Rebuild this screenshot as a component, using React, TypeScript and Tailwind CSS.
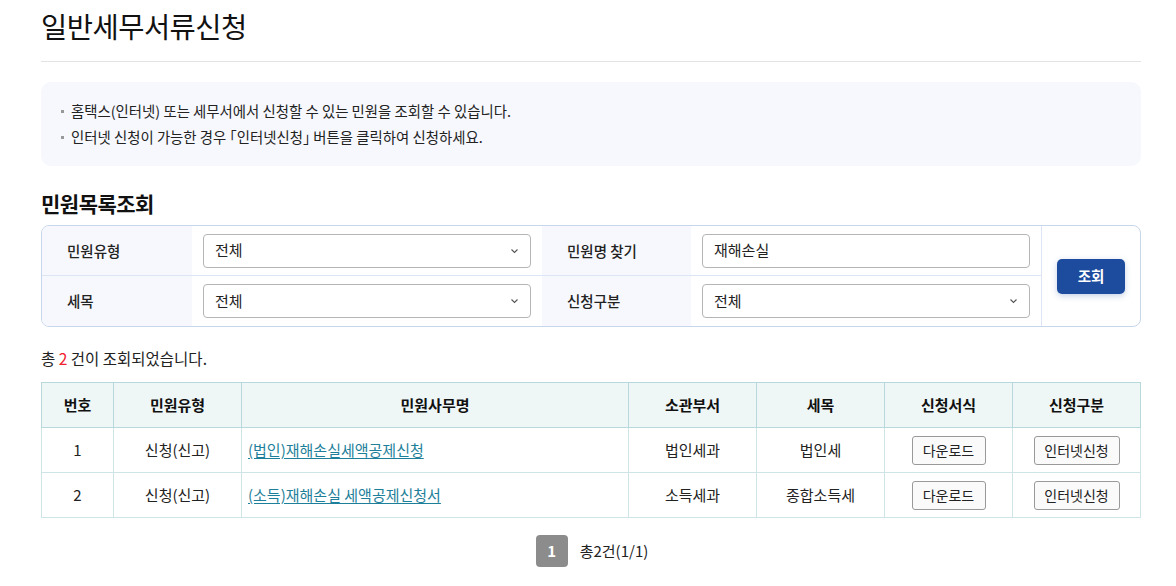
import React from "react";

const font = { fontFamily: '"Noto Sans CJK KR", "Noto Sans", sans-serif' };

function Chevron() {
  return (
    <svg width="9" height="6" viewBox="0 0 9 6" className="shrink-0">
      <path d="M1.5 1.5 L4.5 4.5 L7.5 1.5" fill="none" stroke="#555" strokeWidth="1.1" />
    </svg>
  );
}

function SelectBox({ value }: { value: string }) {
  return (
    <div className="flex h-[34px] w-full items-center justify-between rounded-[4px] border border-[#b5b5b5] bg-white pl-[11px] pr-[11px] text-[15px] text-[#222]">
      <span>{value}</span>
      <Chevron />
    </div>
  );
}

function InputBox({ value }: { value: string }) {
  return (
    <div className="flex h-[34px] w-full items-center rounded-[4px] border border-[#b5b5b5] bg-white pl-[11px] text-[15px] text-[#222]">
      {value}
    </div>
  );
}

const rows = [
  { no: "1", type: "신청(신고)", name: "(법인)재해손실세액공제신청", dept: "법인세과", tax: "법인세" },
  { no: "2", type: "신청(신고)", name: "(소득)재해손실 세액공제신청서", dept: "소득세과", tax: "종합소득세" },
];

function SmallBtn({ label, w }: { label: string; w: string }) {
  return (
    <button className={`inline-flex h-[29px] ${w} items-center justify-center rounded-[3px] border border-[#999] bg-[#fafafa] text-[14px] text-[#222]`}>
      {label}
    </button>
  );
}

export default function App() {
  return (
    <div className="min-h-[586px] w-[1176px] bg-white text-[#111]" style={font}>
      <div className="ml-[41px] w-[1100px]">
        <h1 className="pt-[6px] text-[28.5px] font-normal leading-[40px] tracking-[-0.5px] text-[#111]">일반세무서류신청</h1>
        <div className="mt-[15px] h-px w-full bg-[#e3e3e3]" />

        <div className="mt-[20px] rounded-[10px] bg-[#f6f8fd] px-[20px] py-[16px] text-[14.4px] leading-[26px] text-[#222]">
          <div className="flex items-center">
            <span className="mr-[7px] inline-block h-[3px] w-[3px] bg-[#999]" />
            홈택스(인터넷) 또는 세무서에서 신청할 수 있는 민원을 조회할 수 있습니다.
          </div>
          <div className="flex items-center">
            <span className="mr-[7px] inline-block h-[3px] w-[3px] bg-[#999]" />
            인터넷 신청이 가능한 경우 ｢인터넷신청｣ 버튼을 클릭하여 신청하세요.
          </div>
        </div>

        <h2 className="mt-[22px] text-[21px] font-bold leading-[30px] tracking-[-0.5px] text-[#111]">민원목록조회</h2>

        <div className="mt-[7px] flex overflow-hidden rounded-[8px] border border-[#c8d6ec]">
          <div className="flex-1">
            <div className="flex h-[50px] border-b border-[#dbe5f3]">
              <div className="flex w-[150px] items-center bg-[#f6f8fd] pl-[25px] text-[14.5px] font-medium text-[#222]">민원유형</div>
              <div className="flex w-[350px] items-center px-[11px]"><SelectBox value="전체" /></div>
              <div className="flex w-[149px] items-center bg-[#f6f8fd] pl-[25px] text-[14.5px] font-medium text-[#222]">민원명 찾기</div>
              <div className="flex w-[350px] items-center px-[11px]"><InputBox value="재해손실" /></div>
            </div>
            <div className="flex h-[50px]">
              <div className="flex w-[150px] items-center bg-[#f6f8fd] pl-[25px] text-[14.5px] font-medium text-[#222]">세목</div>
              <div className="flex w-[350px] items-center px-[11px]"><SelectBox value="전체" /></div>
              <div className="flex w-[149px] items-center bg-[#f6f8fd] pl-[25px] text-[14.5px] font-medium text-[#222]">신청구분</div>
              <div className="flex w-[350px] items-center px-[11px]"><SelectBox value="전체" /></div>
            </div>
          </div>
          <div className="flex w-[100px] items-center justify-center border-l border-[#dbe5f3]">
            <button className="h-[35px] w-[68px] rounded-[5px] bg-[#1d4b9e] text-[14.5px] font-bold text-white shadow-[0_2px_6px_rgba(29,75,158,0.25)]">조회</button>
          </div>
        </div>

        <p className="mt-[20px] text-[15.5px] leading-[22px] text-[#222]">
          총 <span className="text-[#f0202c]">2</span> 건이 조회되었습니다.
        </p>

        <table className="mt-[13px] w-full border-collapse border border-[#b8d9dc] text-[15px] text-[#222]">
          <colgroup>
            <col className="w-[72px]" />
            <col className="w-[128px]" />
            <col className="w-[387px]" />
            <col className="w-[128px]" />
            <col className="w-[128px]" />
            <col className="w-[128px]" />
            <col />
          </colgroup>
          <thead>
            <tr className="h-[45px] bg-[#eef7f6]">
              {["번호", "민원유형", "민원사무명", "소관부서", "세목", "신청서식", "신청구분"].map((h) => (
                <th key={h} className="border border-[#b8d9dc] font-bold text-[#111]">{h}</th>
              ))}
            </tr>
          </thead>
          <tbody>
            {rows.map((r) => (
              <tr key={r.no} className="h-[45px]">
                <td className="border border-[#cfe4e6] text-center">{r.no}</td>
                <td className="border border-[#cfe4e6] text-center">{r.type}</td>
                <td className="border border-[#cfe4e6] pl-[6px] text-left">
                  <a className="text-[#1e7f9a] underline underline-offset-2">{r.name}</a>
                </td>
                <td className="border border-[#cfe4e6] text-center">{r.dept}</td>
                <td className="border border-[#cfe4e6] text-center">{r.tax}</td>
                <td className="border border-[#cfe4e6] text-center"><SmallBtn label="다운로드" w="w-[74px]" /></td>
                <td className="border border-[#cfe4e6] text-center"><SmallBtn label="인터넷신청" w="w-[86px]" /></td>
              </tr>
            ))}
          </tbody>
        </table>

        <div className="mt-[17px] flex items-center justify-center gap-[12px] pl-[2px]">
          <span className="flex h-[32px] w-[32px] items-center justify-center rounded-[4px] bg-[#8c8c8c] text-[15px] font-bold text-white">1</span>
          <span className="text-[15px] text-[#222]">총2건(1/1)</span>
        </div>
      </div>
    </div>
  );
}
